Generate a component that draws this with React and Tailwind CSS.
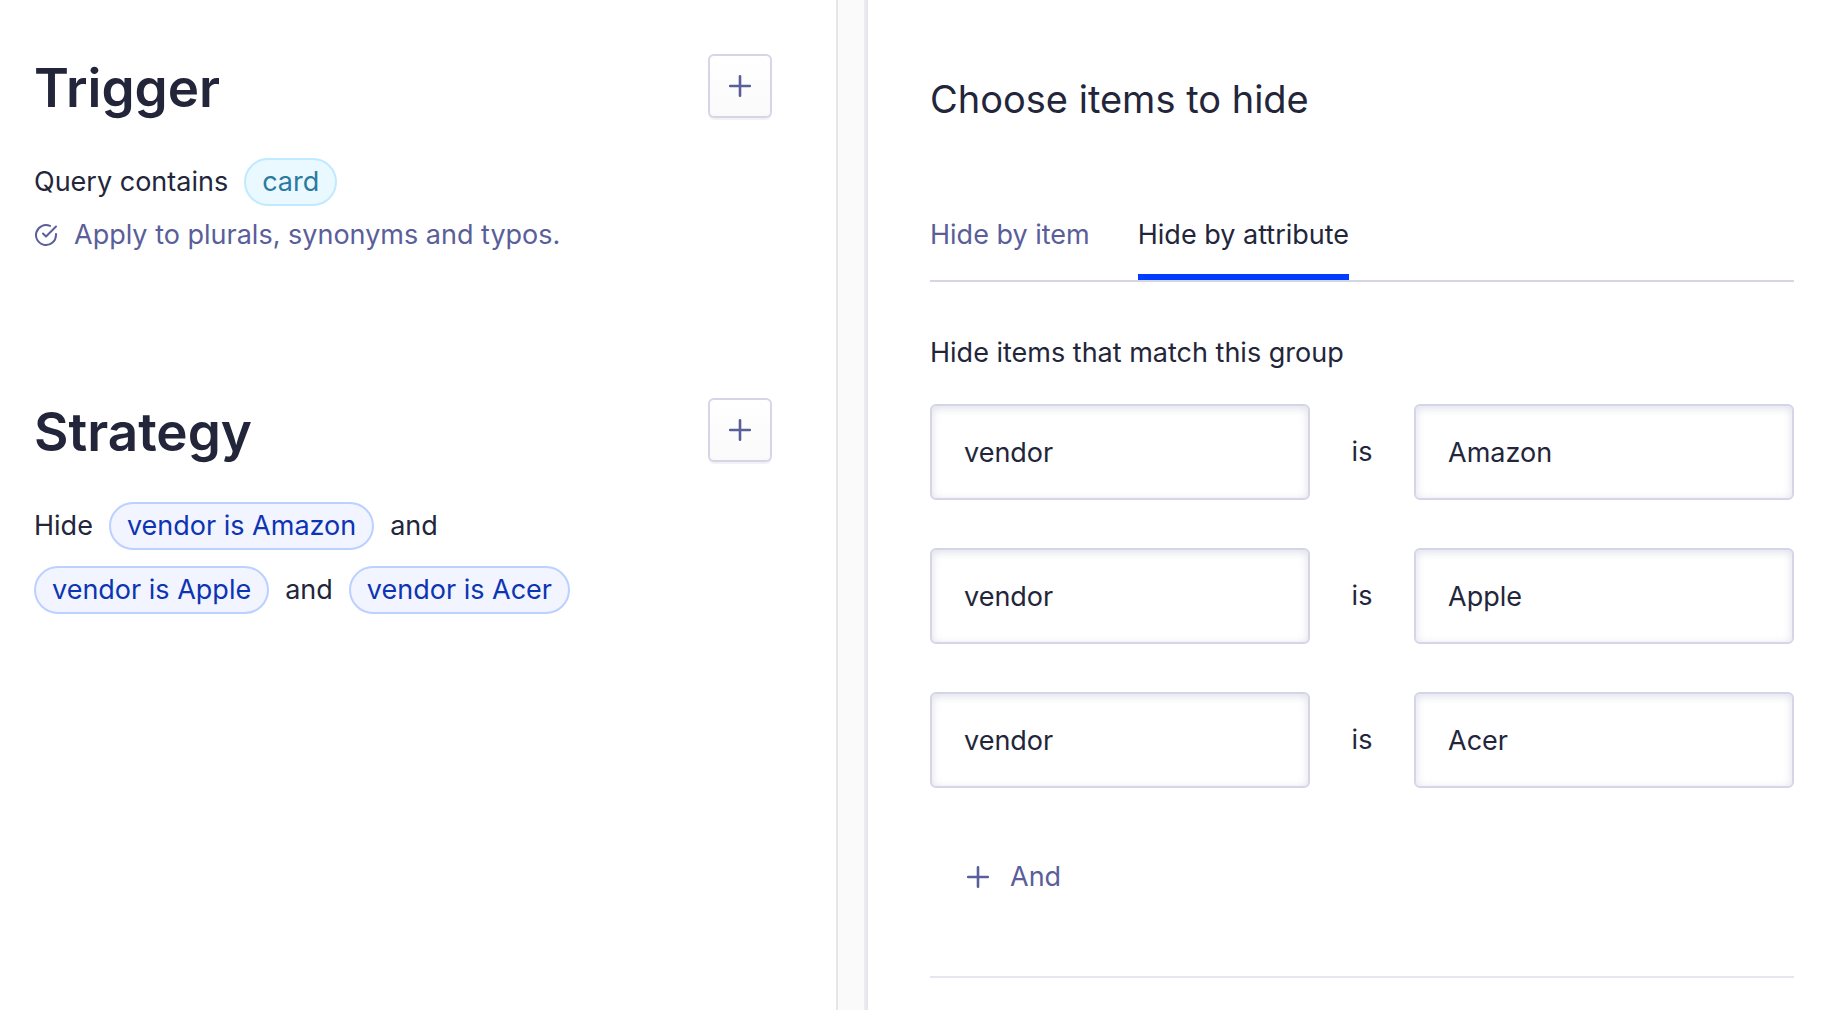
import React, { useState } from "react";

function PlusIcon() {
  return (
    <svg aria-hidden="true" width="24" height="24" viewBox="0 0 24 24" fill="none" stroke="currentColor" strokeWidth="2.6" strokeLinecap="round">
      <path d="M12 2.2v19.6M2.2 12h19.6" />
    </svg>
  );
}

function CheckCircleIcon() {
  return (
    <svg aria-hidden="true" className="shrink-0" width="24" height="24" viewBox="0 0 24 24" fill="none" stroke="currentColor" strokeWidth="2" strokeLinecap="round" strokeLinejoin="round">
      <path d="M22 11v1a10 10 0 1 1-6-9.1" />
      <path d="M22 3.5L12 13.5l-3-3" />
    </svg>
  );
}

function Section({ title, children }) {
  return (
    <section className="min-h-[248px]">
      <div className="flex items-start justify-between">
        <h2 className="text-[53px] leading-[68px] font-semibold">{title}</h2>
        <button
          type="button"
          aria-label={`Add ${title.toLowerCase()}`}
          className="flex size-16 items-center justify-center rounded-md border-2 border-[#d6d4e7] bg-linear-to-b from-white to-[#fafafa] text-[#5a5e9a] shadow-[0_2px_0_#0000000d]"
        >
          <PlusIcon />
        </button>
      </div>
      <div className="mt-9">{children}</div>
    </section>
  );
}

function Pill({ children }) {
  return (
    <span className="flex h-12 items-center rounded-full border-2 border-[#bbd1ff] bg-[#f2f4ff] px-4 text-[#0c34b3]">
      {children}
    </span>
  );
}

function TabButton({ label, active, onClick }) {
  return (
    <button
      type="button"
      role="tab"
      aria-selected={active}
      onClick={onClick}
      className={
        active
          ? "border-b-6 border-[#003dff] pb-[18px] text-[#23263b]"
          : "border-b-6 border-transparent pb-[18px] text-[#5a5e9a]"
      }
    >
      {label}
    </button>
  );
}

function Field({ label, value }) {
  return (
    <input
      type="text"
      aria-label={label}
      defaultValue={value}
      className="h-24 w-full min-w-0 rounded-md border-2 border-[#d6d4e7] bg-white px-8 text-[#23263b] shadow-[inset_0_2px_8px_#777aaf40] outline-none"
    />
  );
}

const vendors = ["Amazon", "Apple", "Acer"];
const tabs = ["Hide by item", "Hide by attribute"];

export default function App() {
  const [tab, setTab] = useState(tabs[1]);
  return (
    <div className="grid min-h-screen grid-cols-[838fr_30px_974fr] bg-white font-['Inter',sans-serif] text-[27px] leading-[42px] text-[#23263b]">
      <main className="flex min-w-0 flex-col gap-24 border-r-2 border-[#e6e6e6] pt-[54px] pr-16 pl-[34px]">
        <Section title="Trigger">
          <p className="flex items-center gap-4">
            Query contains
            <span className="flex h-12 items-center rounded-full border-2 border-[#bfeaff] bg-[#eaf8ff] px-4 text-[#2b7a9f]">
              card
            </span>
          </p>
          <p className="mt-2 flex items-center gap-4 text-[#5a5e9a]">
            <CheckCircleIcon />
            Apply to plurals, synonyms and typos.
          </p>
        </Section>
        <Section title="Strategy">
          <div className="flex max-w-[560px] flex-wrap items-center gap-4">
            <span>Hide</span>
            <Pill>vendor is Amazon</Pill>
            <span>and</span>
            <Pill>vendor is Apple</Pill>
            <span>and</span>
            <Pill>vendor is Acer</Pill>
          </div>
        </Section>
      </main>
      <div className="border-r-2 border-[#e6e6f0] bg-[#fafafa]">
        <div className="h-full border-r-2 border-[#ebebee]" />
      </div>
      <aside className="min-w-0 px-12 pt-[74px] pl-[62px]">
        <h1 className="text-[38px] leading-[50px]">Choose items to hide</h1>
        <div role="tablist" className="mt-[90px] flex gap-12 border-b-2 border-[#d6d4e7]">
          {tabs.map((name) => (
            <TabButton key={name} label={name} active={tab === name} onClick={() => setTab(name)} />
          ))}
        </div>
        <p className="mt-[50px]">Hide items that match this group</p>
        <div className="mt-[30px] flex flex-col gap-12">
          {vendors.map((vendor) => (
            <div key={vendor} className="grid grid-cols-[1fr_104px_1fr] items-center">
              <Field label="Attribute" value="vendor" />
              <span className="text-center">is</span>
              <Field label="Value" value={vendor} />
            </div>
          ))}
        </div>
        <button type="button" className="mt-17 ml-9 flex items-center gap-5 text-[#5a5e9a]">
          <PlusIcon />
          And
        </button>
        <hr className="mt-[78px] border-t-2 border-[#e6e6f0]" />
      </aside>
    </div>
  );
}
